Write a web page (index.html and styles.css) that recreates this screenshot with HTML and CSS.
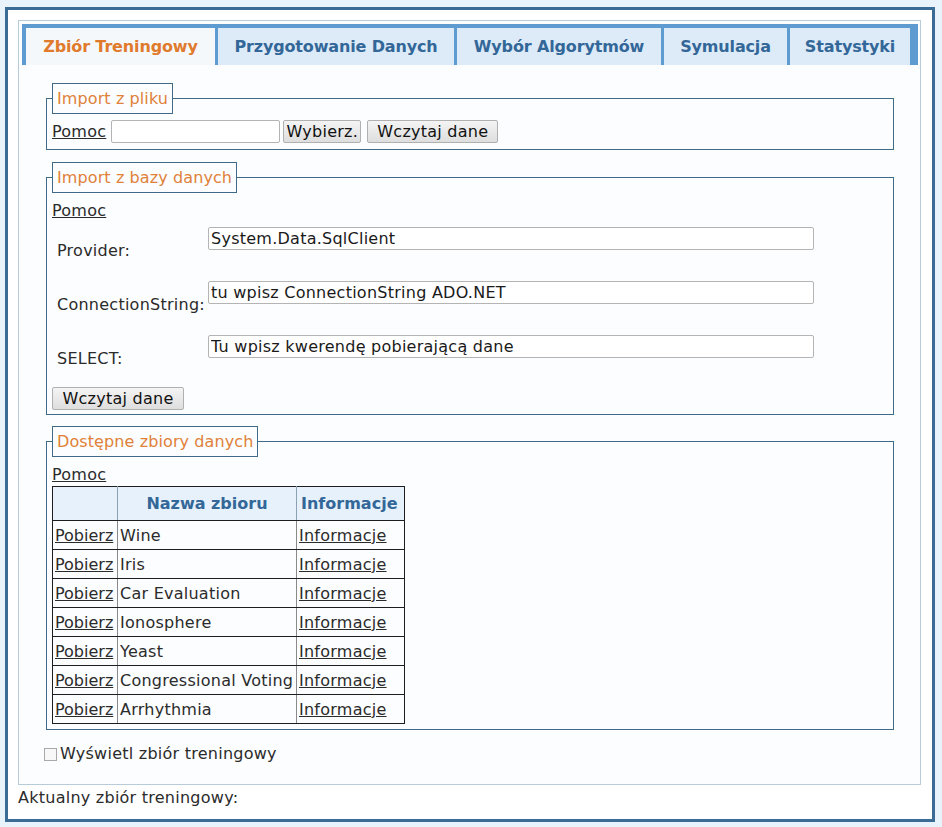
FILE: index.html
```html
<!DOCTYPE html>
<html lang="pl">
<head>
<meta charset="utf-8">
<title>Zbiór Treningowy</title>
<link rel="stylesheet" href="styles.css">
</head>
<body>
<div class="frame">
  <div class="panel">
    <div class="tabs">
      <div class="tab active t-train">Zbiór Treningowy</div>
      <div class="tab t-prep">Przygotowanie Danych</div>
      <div class="tab t-algo">Wybór Algorytmów</div>
      <div class="tab t-sim">Symulacja</div>
      <div class="tab t-stat">Statystyki</div>
    </div>
    <div class="tab-body">
      <fieldset class="box box-file">
        <legend>Import z pliku</legend>
        <div class="file-row">
          <a href="#" class="link">Pomoc</a>
          <input class="text file-text" type="text">
          <button class="btn btn-browse">Wybierz.</button>
          <button class="btn btn-load">Wczytaj dane</button>
        </div>
      </fieldset>

      <fieldset class="box box-db">
        <legend>Import z bazy danych</legend>
        <a href="#" class="link help">Pomoc</a>
        <div class="db-grid">
          <div class="db-label">Provider:</div>
          <div class="db-field"><input class="text db-input" type="text" value="System.Data.SqlClient"></div>
          <div class="db-label">ConnectionString:</div>
          <div class="db-field"><input class="text db-input" type="text" value="tu wpisz ConnectionString ADO.NET"></div>
          <div class="db-label">SELECT:</div>
          <div class="db-field"><input class="text db-input" type="text" value="Tu wpisz kwerendę pobierającą dane"></div>
        </div>
        <button class="btn btn-db">Wczytaj dane</button>
      </fieldset>

      <fieldset class="box box-sets">
        <legend>Dostępne zbiory danych</legend>
        <a href="#" class="link help">Pomoc</a>
        <table class="sets">
          <thead>
            <tr><th class="c1"></th><th class="c2">Nazwa zbioru</th><th class="c3">Informacje</th></tr>
          </thead>
          <tbody>
            <tr><td><a href="#" class="link">Pobierz</a></td><td>Wine</td><td><a href="#" class="link">Informacje</a></td></tr>
            <tr><td><a href="#" class="link">Pobierz</a></td><td>Iris</td><td><a href="#" class="link">Informacje</a></td></tr>
            <tr><td><a href="#" class="link">Pobierz</a></td><td>Car Evaluation</td><td><a href="#" class="link">Informacje</a></td></tr>
            <tr><td><a href="#" class="link">Pobierz</a></td><td>Ionosphere</td><td><a href="#" class="link">Informacje</a></td></tr>
            <tr><td><a href="#" class="link">Pobierz</a></td><td>Yeast</td><td><a href="#" class="link">Informacje</a></td></tr>
            <tr><td><a href="#" class="link">Pobierz</a></td><td>Congressional Voting</td><td><a href="#" class="link">Informacje</a></td></tr>
            <tr><td><a href="#" class="link">Pobierz</a></td><td>Arrhythmia</td><td><a href="#" class="link">Informacje</a></td></tr>
          </tbody>
        </table>
      </fieldset>

      <label class="check-row"><span class="check"></span>Wyświetl zbiór treningowy</label>
    </div>
  </div>
  <div class="current">Aktualny zbiór treningowy:</div>
</div>
</body>
</html>
```

FILE: styles.css
```css
* { box-sizing: border-box; }

html, body {
  margin: 0;
  padding: 0;
}

body {
  background: #e9f3fc;
  font-family: "DejaVu Sans", Verdana, sans-serif;
  font-size: 16px;
  letter-spacing: 0.25px;
  color: #2b2b2b;
}

.frame {
  width: 930px;
  height: 815px;
  margin: 7px 0 0 5px;
  border: 3px solid #3a6c96;
  background: #ffffff;
  padding: 10px 11px 0 10px;
}

.panel {
  height: 765px;
  border: 1px solid #b7cbd9;
  background: #fbfdfe;
  padding: 3px 2px 0 3px;
}

.tabs {
  display: flex;
  gap: 3px;
  background: #5e9bd1;
  padding: 4px 8px 0 4px;
  height: 41px;
}

.tab {
  height: 37px;
  line-height: 37px;
  padding: 0;
  text-align: center;
  background: #ddebf8;
  color: #336798;
  font-weight: bold;
  font-size: 16px;
  letter-spacing: -0.15px;
  white-space: nowrap;
  flex: none;
}

.t-train { width: 189px; }
.t-prep { width: 236px; }
.t-algo { width: 204px; }
.t-sim { width: 123px; }
.t-stat { width: 120px; }

.tab.active {
  background: #f5f8fb;
  color: #e07a2c;
}

.tab-body {
  padding: 18px 24px 0 24px;
}

.box {
  margin: 0;
  border: 1px solid #3f6b89;
  padding: 0 5px;
  min-width: 0;
}

.box legend {
  border: 1px solid #3f6b89;
  color: #e0813a;
  background: #fbfdfe;
  padding: 0 4px;
  height: 31px;
  line-height: 29px;
  font-size: 16px;
  letter-spacing: 0.1px;
}

.link {
  color: #2b2b2b;
  text-decoration: underline;
}

.file-row {
  display: flex;
  align-items: center;
  height: 23px;
  margin: 6px 0 6px;
}

.file-row .link {
  margin-right: 5px;
}

.text {
  font-family: "DejaVu Sans", Verdana, sans-serif;
  font-size: 16px;
  letter-spacing: 0.25px;
  color: #1a1a1a;
  height: 23px;
  border: 1px solid #b4b4b4;
  border-radius: 2px;
  background: #ffffff;
  padding: 0 2px;
  margin: 0;
}

.file-text {
  width: 169px;
}

.btn {
  font-family: "DejaVu Sans", Verdana, sans-serif;
  font-size: 16px;
  letter-spacing: 0.25px;
  color: #111;
  height: 23px;
  margin: 0;
  padding: 0;
  border: 1px solid #b0b0b0;
  border-radius: 2px;
  background: linear-gradient(#f4f4f4, #dedede);
  line-height: 21px;
}

.btn-browse {
  margin-left: 3px;
  width: 78px;
}

.btn-load {
  margin-left: 6px;
  width: 131px;
}

.box-db {
  margin-top: 12px;
  padding-bottom: 4px;
}

.help {
  display: block;
  width: max-content;
  line-height: 20px;
}

.box-db .help {
  margin-top: 8px;
}

.db-grid {
  display: grid;
  grid-template-columns: 156px 606px;
  grid-auto-rows: 54px;
  margin-top: 3px;
}

.db-label {
  padding: 17px 0 0 5px;
  line-height: 20px;
}

.db-field {
  padding-top: 3px;
}

.db-input {
  width: 606px;
}

.btn-db {
  display: block;
  margin-top: 1px;
  width: 132px;
}

.box-sets {
  margin-top: 11px;
  padding-bottom: 5px;
}

.box-sets .help {
  margin-top: 8px;
}

.sets {
  border-collapse: collapse;
  margin-top: 1px;
  border: 1px solid #1e1e1e;
  font-size: 16px;
}

.sets th {
  background: #e6f1fb;
  color: #336798;
  font-weight: bold;
  letter-spacing: 0;
  height: 34px;
  padding: 0 2px;
  border: 1px solid #1e1e1e;
  border-left-color: #8ca2b3;
  border-right-color: #8ca2b3;
}

.sets th.c1 { width: 65px; }
.sets th.c2 { width: 179px; }
.sets th.c3 { width: 108px; text-align: left; padding-left: 4px; }

.sets td {
  height: 29px;
  padding: 0 2px;
  border: 1px solid #1e1e1e;
  border-left-color: #8a8a8a;
  border-right-color: #8a8a8a;
  white-space: nowrap;
  text-align: left;
}

.sets td:first-child { letter-spacing: 0; }

.sets th:first-child,
.sets td:first-child { border-left-color: #1e1e1e; }
.sets th:last-child,
.sets td:last-child { border-right-color: #1e1e1e; }

.check-row {
  display: flex;
  align-items: center;
  margin: 14px 0 0 -2px;
  line-height: 20px;
}

.check {
  width: 13px;
  height: 13px;
  border: 1px solid #a9a9a9;
  background: #f8f8f8;
  margin-right: 3px;
}

.current {
  margin-top: 3px;
  line-height: 20px;
}
```
